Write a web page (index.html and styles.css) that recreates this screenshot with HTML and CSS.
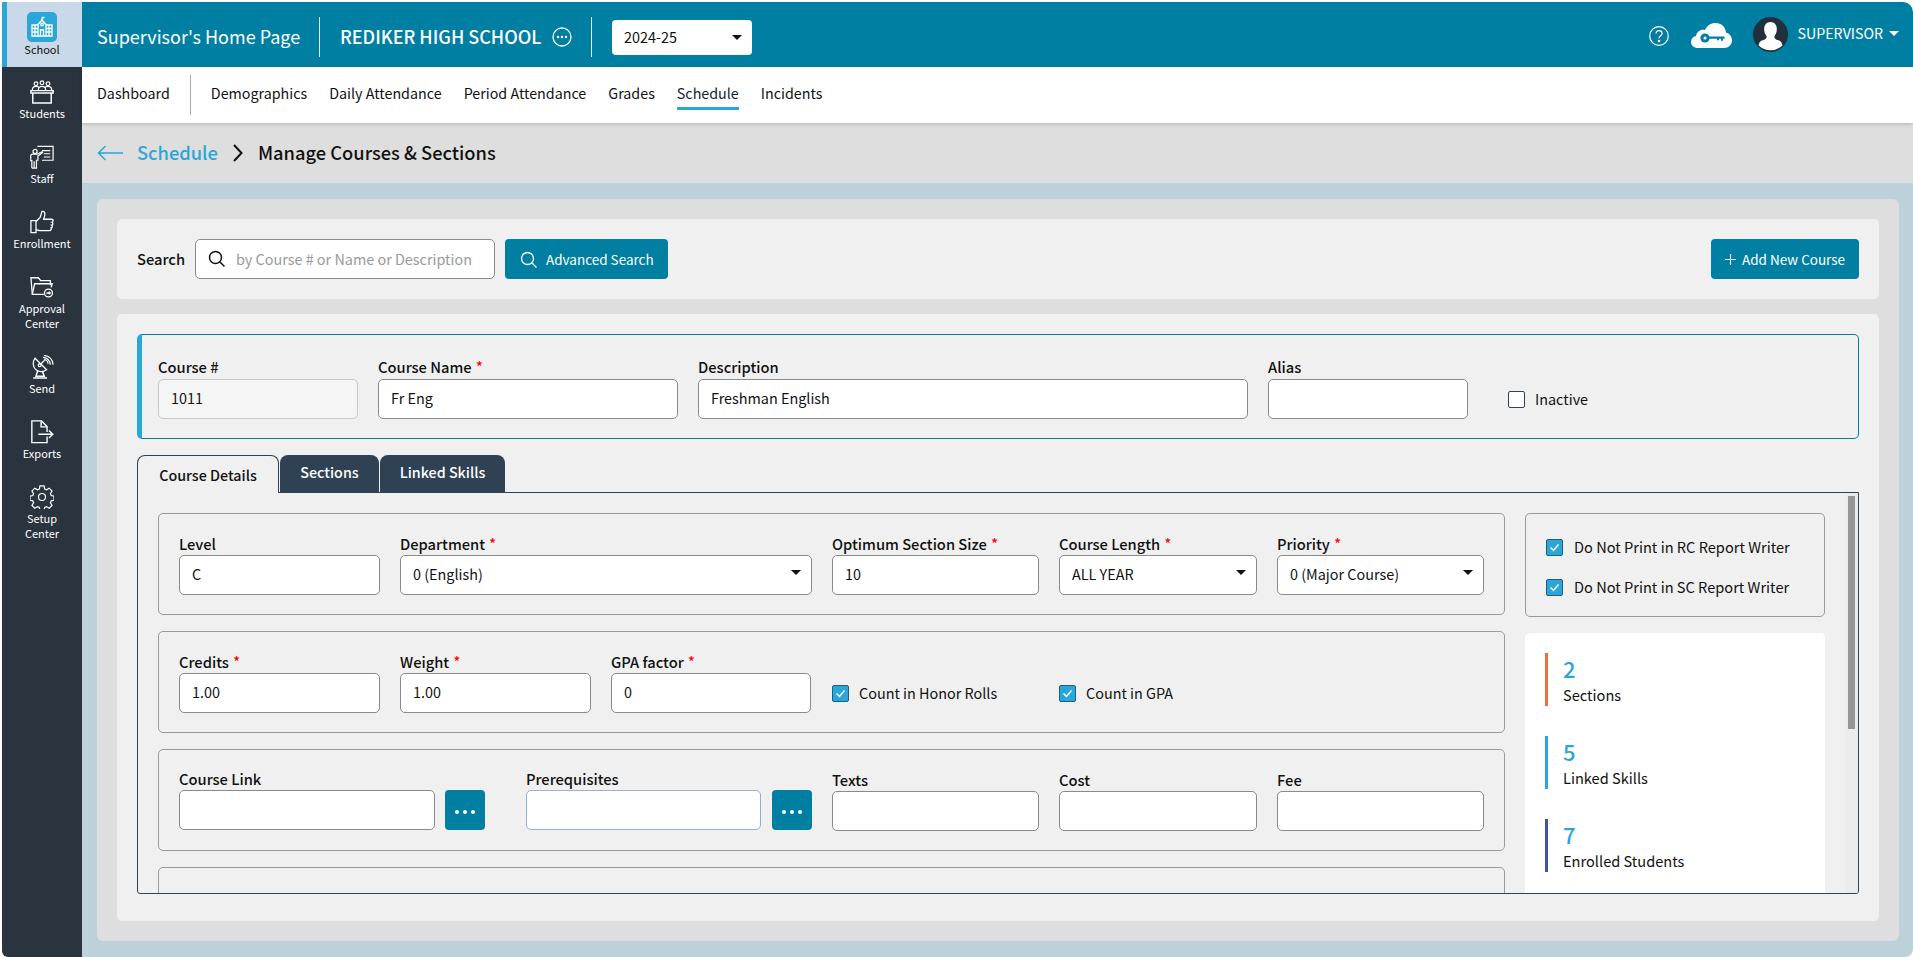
FILE: index.html
```html
<!DOCTYPE html>
<html lang="en">
<head>
<meta charset="utf-8">
<title>Manage Courses &amp; Sections</title>
<link rel="stylesheet" href="styles.css">
</head>
<body>
<div class="app">
  <nav class="side">
    <a class="side-item active">
      <span class="school-ico"><svg width="30" height="30" viewBox="0 0 30 30" fill="none" stroke="#fff" stroke-width="1.3"><path d="M11 12.5 15 8l4 4.5V24h-8z"/><path d="M15 8V5.5M15 5.5h2.500"/><circle cx="15" cy="12.5" r="1.3"/><path d="M13.5 24v-6h3v6"/><path d="M11 13H5v11h6M19 13h6v11h-6"/><path d="M5 16.5h6M5 20h6M19 16.5h6M19 20h6M8 13v11M22 13v11"/></svg></span>
      <span class="side-label">School</span>
    </a>
    <a class="side-item">
      <svg width="24" height="24" viewBox="0 0 26 26" fill="none" stroke="#fff" stroke-width="1.3"><circle cx="6.5" cy="4" r="2"/><circle cx="13" cy="3" r="2"/><circle cx="19.5" cy="4" r="2"/><path d="M2.5 11c0-3 1.500-4 4-4s3 .6 3.500 1.500M23.500 11c0-3-1.500-4-4-4s-3 .6-3.500 1.500M9 11c0-2.500 1.500-4 4-4s4 1.500 4 4"/><path d="M1 11.500h24v2.500H1zM3 14v11h20V14" stroke-width="1.600"/></svg>
      <span class="side-label">Students</span>
    </a>
    <a class="side-item">
      <svg width="24" height="24" viewBox="0 0 26 26" fill="none" stroke="#fff" stroke-width="1.300"><path d="M8 1.500h17v15H13"/><path d="M13 6h9M15 9.500h7M15 13h7"/><circle cx="5.500" cy="7" r="2.200"/><path d="M2 25v-8H.8v-5c0-1.500 1-2.200 2.200-2.200H8l5-2.500.6 1-5 3.500v4.700H7V25H4.500v-7.500M4.500 25H2"/></svg>
      <span class="side-label">Staff</span>
    </a>
    <a class="side-item">
      <svg width="24" height="24" viewBox="0 0 26 26" fill="none" stroke="#fff" stroke-width="1.400"><path d="M1 11.500h5.500v13H1zM6.500 12.500l4.500-4.500 2-6.500c2.500-.5 3.500 1.500 3 4l-1.200 4.500H23.500c2 0 2 3 .3 3.300 1.500.7 1.200 3-.3 3.200 1.200.8.900 2.800-.7 3 .7 1-.1 2.800-1.500 2.800H11c-2 0-3-1-4.500-1"/></svg>
      <span class="side-label">Enrollment</span>
    </a>
    <a class="side-item tall">
      <svg width="24" height="24" viewBox="0 0 26 26" fill="none" stroke="#fff" stroke-width="1.400"><path d="M15 21H2.500L1 3h8l2.500 3h10.500v5"/><path d="M2.500 21 5 9.500h19l-1 4"/><circle cx="20" cy="19.500" r="4.300"/><path d="M17.800 19.500h4.200M20.500 18l1.500 1.500-1.500 1.500"/></svg>
      <span class="side-label">Approval<br>Center</span>
    </a>
    <a class="side-item">
      <svg width="24" height="24" viewBox="0 0 26 26" fill="none" stroke="#fff" stroke-width="1.300"><path d="M5.500 3.500c-3 4-2.500 9 .5 12s8 3.500 12 .5z"/><circle cx="10.500" cy="11" r="1.600"/><path d="M10.500 11l5-5M14 2.500c4 0 8 3.500 8 8M15 .5c5.500 0 10 4.500 10 10M15 5c2.500 0 4.500 2 4.500 4.500"/><path d="M8.500 16.500 6.500 23h9l-2-5M3.500 25h15" stroke-width="1.600"/></svg>
      <span class="side-label">Send</span>
    </a>
    <a class="side-item">
      <svg width="24" height="24" viewBox="0 0 26 26" fill="none" stroke="#fff" stroke-width="1.500"><path d="M18.500 13V7l-6-6H2v23.500h16.500V18"/><path d="M12 1.500V7.500h6.500"/><path d="M9 15.500h15.500M20.500 11.500l4.200 4-4.200 4"/></svg>
      <span class="side-label">Exports</span>
    </a>
    <a class="side-item tall">
      <svg width="24" height="24" viewBox="0 0 26 26" fill="none" stroke="#fff" stroke-width="1.300"><circle cx="13" cy="13" r="3.800"/><path d="M10.800 1h4.400l.7 3.300 2 .9 2.900-1.800 3.100 3.100-1.800 2.900.9 2 3 .7v4.400l-3 .7-.9 2 1.800 2.900-3.100 3.100-2.900-1.800-2 .9-.7 3h-4.400l-.7-3-2-.9-2.900 1.800-3.100-3.100 1.800-2.900-.9-2-3-.7v-4.400l3-.7.9-2-1.800-2.900 3.100-3.100 2.900 1.800 2-.9z"/></svg>
      <span class="side-label">Setup<br>Center</span>
    </a>
  </nav>

  <div class="main">
    <header class="top">
      <span class="top-title">Supervisor's Home Page</span>
      <span class="top-sep"></span>
      <span class="top-school">REDIKER HIGH SCHOOL</span>
      <svg class="top-more" width="20" height="20" viewBox="0 0 20 20" fill="#fff"><circle cx="10" cy="10" r="9" fill="none" stroke="#fff" stroke-width="1.300"/><circle cx="6" cy="10" r="1.200"/><circle cx="10" cy="10" r="1.200"/><circle cx="14" cy="10" r="1.200"/></svg>
      <span class="top-sep sep-b"></span>
      <span class="year">2024-25<i class="caret-dark"></i></span>
      <span class="top-right">
        <svg class="help" width="20" height="20" viewBox="0 0 20 20" fill="none" stroke="#fff" stroke-width="1.200"><circle cx="10" cy="10" r="9.300"/><path d="M7 7.600c0-1.800 1.400-2.900 3-2.900s3 1 3 2.700c0 2.400-3 2.400-3 4.800"/><circle cx="10" cy="15" r=".7" fill="#fff"/></svg>
        <svg class="cloud" width="41" height="25" viewBox="0 0 41 25"><path fill="#fff" d="M7 25C3 25 0 22.500 0 19c0-3 2-5.500 5-6 1-5 5-7 9-6 2-4.500 6-7 10.500-7 6 0 10 4 10.500 9.500 3.500 1 6 4 6 8 0 4.500-3.500 7.500-8 7.500z"/><circle cx="14" cy="15" r="4.600" fill="#007fa3"/><circle cx="14" cy="15" r="1.500" fill="#fff"/><path fill="#007fa3" d="M18 13.500h15.500v2.200H32v2h-2v-2h-2v1.500h-2v-1.500h-8z"/></svg>
        <svg class="avatar" width="35" height="35" viewBox="0 0 35 35"><circle cx="17.500" cy="17.500" r="17.500" fill="#222f3c"/><path fill="#fff" d="M17.500 5c4 0 6.500 3 6.300 7.500-.1 3-1 5-2.300 6.500-.5 2 .5 3 4 4.300 2.500 1 3.700 2.500 3.900 5.200a17.500 17.500 0 0 1-23.800 0c.2-2.700 1.400-4.200 3.900-5.200 3.500-1.300 4.500-2.300 4-4.300-1.300-1.500-2.200-3.500-2.300-6.500C11 8 13.500 5 17.500 5z"/></svg>
        <span class="user">SUPERVISOR</span><i class="caret-light"></i>
      </span>
    </header>

    <div class="subnav">
      <a class="tab-link dash">Dashboard</a>
      <span class="sub-sep"></span>
      <a class="tab-link">Demographics</a>
      <a class="tab-link">Daily Attendance</a>
      <a class="tab-link">Period Attendance</a>
      <a class="tab-link">Grades</a>
      <a class="tab-link current">Schedule</a>
      <a class="tab-link">Incidents</a>
    </div>

    <div class="crumb">
      <svg class="back" width="26" height="16" viewBox="0 0 26 16" fill="none" stroke="#2ba6d8" stroke-width="1.500"><path d="M26 8H1.500M8.500 1 1.500 8l7 7"/></svg>
      <span class="crumb-link">Schedule</span>
      <svg class="chev" width="11" height="18" viewBox="0 0 11 18" fill="none" stroke="#111" stroke-width="2"><path d="m2 1 7.500 8L2 17"/></svg>
      <span class="crumb-now">Manage Courses &amp; Sections</span>
    </div>

    <div class="content">
      <div class="panel">
        <section class="card search-card">
          <label class="search-label">Search</label>
          <div class="search-box">
            <svg width="18" height="18" viewBox="0 0 18 18" fill="none" stroke="#111" stroke-width="1.500"><circle cx="7.500" cy="7.500" r="6"/><path d="m12 12 4.500 4.500"/></svg>
            <span class="placeholder">by Course # or Name or Description</span>
          </div>
          <button class="btn adv"><svg width="18" height="18" viewBox="0 0 18 18" fill="none" stroke="#fff" stroke-width="1.300"><circle cx="7.500" cy="7.500" r="6"/><path d="m12 12 4.500 4.500"/></svg>Advanced Search</button>
          <button class="btn add"><svg width="11" height="11" viewBox="0 0 11 11" fill="none" stroke="#fff" stroke-width="1.100"><path d="M5.500 0v11M0 5.500h11"/></svg>Add New Course</button>
        </section>

        <section class="card main-card">
          <div class="course-box">
            <div class="field w200"><label>Course #</label><div class="input ro">1011</div></div>
            <div class="field w300"><label>Course Name <b>*</b></label><div class="input">Fr Eng</div></div>
            <div class="field w550"><label>Description</label><div class="input">Freshman English</div></div>
            <div class="field w200"><label>Alias</label><div class="input"></div></div>
            <div class="inline-check inactive"><span class="check empty"></span>Inactive</div>
          </div>

          <div class="tabs">
            <span class="tab on">Course Details</span>
            <span class="tab t2">Sections</span>
            <span class="tab t3">Linked Skills</span>
          </div>

          <div class="tab-body">
            <div class="col-left">
              <div class="group row-a">
                <div class="field"><label>Level</label><div class="input">C</div></div>
                <div class="field"><label>Department <b>*</b></label><div class="input sel">0 (English)<i class="caret-dark"></i></div></div>
                <div class="field"><label>Optimum Section Size <b>*</b></label><div class="input">10</div></div>
                <div class="field"><label>Course Length <b>*</b></label><div class="input sel">ALL YEAR<i class="caret-dark"></i></div></div>
                <div class="field"><label>Priority <b>*</b></label><div class="input sel">0 (Major Course)<i class="caret-dark"></i></div></div>
              </div>
              <div class="group row-b">
                <div class="field"><label>Credits <b>*</b></label><div class="input">1.00</div></div>
                <div class="field"><label>Weight <b>*</b></label><div class="input">1.00</div></div>
                <div class="field"><label>GPA factor <b>*</b></label><div class="input">0</div></div>
                <div class="inline-check"><span class="check on"><svg width="11" height="9" viewBox="0 0 11 9" fill="none" stroke="#fff" stroke-width="1.500"><path d="m1.500 4.500 3 3 5-6"/></svg></span>Count in Honor Rolls</div>
                <div class="inline-check"><span class="check on"><svg width="11" height="9" viewBox="0 0 11 9" fill="none" stroke="#fff" stroke-width="1.500"><path d="m1.500 4.500 3 3 5-6"/></svg></span>Count in GPA</div>
              </div>
              <div class="group row-c">
                <div class="field gap-right"><label>Course Link</label><div class="pick first"><div class="input"></div><button class="dots"><i></i><i></i><i></i></button></div></div>
                <div class="field"><label>Prerequisites</label><div class="pick"><div class="input soft"></div><button class="dots"><i></i><i></i><i></i></button></div></div>
                <div class="field low"><label>Texts</label><div class="input"></div></div>
                <div class="field low"><label>Cost</label><div class="input"></div></div>
                <div class="field low"><label>Fee</label><div class="input"></div></div>
              </div>
              <div class="group"></div>
            </div>

            <div class="col-right">
              <div class="group flags">
                <div class="inline-check"><span class="check on"><svg width="11" height="9" viewBox="0 0 11 9" fill="none" stroke="#fff" stroke-width="1.500"><path d="m1.500 4.500 3 3 5-6"/></svg></span>Do Not Print in RC Report Writer</div>
                <div class="inline-check"><span class="check on"><svg width="11" height="9" viewBox="0 0 11 9" fill="none" stroke="#fff" stroke-width="1.500"><path d="m1.500 4.500 3 3 5-6"/></svg></span>Do Not Print in SC Report Writer</div>
              </div>
              <div class="stats">
                <div class="stat s-orange"><strong>2</strong><span>Sections</span></div>
                <div class="stat s-blue"><strong>5</strong><span>Linked Skills</span></div>
                <div class="stat s-indigo"><strong>7</strong><span>Enrolled Students</span></div>
              </div>
            </div>

            <div class="track"><div class="thumb"></div></div>
          </div>
        </section>
      </div>
    </div>
  </div>
</div>
</body>
</html>
```
FILE: styles.css
```css
* { box-sizing: border-box; }
html, body { margin: 0; height: 957px; overflow: hidden; background: #fff; }
body { padding: 2px 0 0 2px; font-family: "Noto Sans CJK JP", "Noto Sans", sans-serif; font-size: 14.400px; color: #111; }
i { font-style: normal; display: block; }
button { font-family: inherit; border: 0; }

.app { display: flex; height: 955px; }

/* sidebar */
.side { width: 80px; flex: none; background: #29343f; display: flex; flex-direction: column; border-bottom-left-radius: 6px; }
.side-item { height: 65px; flex: none; display: flex; flex-direction: column; align-items: center; padding-top: 13px; color: #fff; }
.side-item.tall { height: 80px; }
.side-item > svg { flex: none; }
.side-item.active { background: #c9d9e9; border-left: 5px solid #2ba6d8; padding: 10px 5px 0 0; color: #111; }
.school-ico { width: 30px; height: 30px; background: #2ba6d8; border-radius: 5px; display: block; }
.school-ico svg { display: block; }
.side-label { font-size: 11px; line-height: 15px; margin-top: 2px; text-align: center; }
.side-item.active .side-label { margin-top: 0; }

.main { flex: 1; min-width: 0; display: flex; flex-direction: column; }

/* header */
.top { height: 65px; flex: none; background: #007fa3; border-top-right-radius: 10px; display: flex; align-items: center; padding: 5px 0 0 15px; color: #fff; }
.top-title { font-size: 18px; width: 222px; white-space: nowrap; margin-top: -3px; }
.top-sep { width: 1px; height: 40px; background: #e3eef2; flex: none; }
.top-school { font-size: 18px; font-weight: 500; margin: -3px 0 0 20px; width: 212px; white-space: nowrap; }
.top-more { margin-left: 0; flex: none; }
.sep-b { margin-left: 19px; }
.year { width: 140px; height: 35px; margin-left: 20px; background: #fff; color: #111; border-radius: 4px; display: flex; align-items: center; justify-content: space-between; padding: 0 10px 2px 12px; }
.caret-dark { width: 0; height: 0; border-left: 5px solid transparent; border-right: 5px solid transparent; border-top: 5px solid #111; }
.year .caret-dark { margin-top: 2px; }
.top-right { margin-left: auto; display: flex; align-items: center; padding-right: 14px; }
.help { margin: -2px 22px 0 0; }
.cloud { margin: -3px 21px 0 0; }
.avatar { margin: -6px 10px 0 0; }
.user { font-size: 14.200px; margin-top: -8px; }
.caret-light { margin: -7px 0 0 6px; width: 0; height: 0; border-left: 5px solid transparent; border-right: 5px solid transparent; border-top: 5px solid #fff; }

/* sub nav */
.subnav { height: 56px; flex: none; background: #fff; display: flex; align-items: flex-start; padding: 8px 0 0 15px; box-shadow: 0 1px 4px rgba(0,0,0,.2); position: relative; font-size: 14.300px; }
.tab-link { margin-right: 22px; line-height: 36px; height: 35px; white-space: nowrap; }
.tab-link.dash { margin-right: 20px; }
.sub-sep { width: 1px; height: 40px; background: #aaa; margin-right: 20px; }
.tab-link.current { box-shadow: inset 0 -3px 0 #2ba6d8; color: #123; }

/* breadcrumb */
.crumb { height: 60px; flex: none; background: #dedede; display: flex; align-items: center; padding-left: 15px; }
.crumb-link { font-size: 18.300px; font-weight: 500; color: #2ba6d8; margin: -2px 0 0 14px; }
.chev { margin: 0 15px 0 14px; }
.crumb-now { font-size: 18.300px; font-weight: 500; margin-top: -2px; }

/* content */
.content { flex: 1; min-height: 0; background: #bdd1db; padding: 16px 14px 14px 15px; border-bottom-right-radius: 8px; }
.panel { height: 742px; background: #dedede; border-radius: 6px; padding: 20px; display: flex; flex-direction: column; gap: 15px; }
.card { background: #f0f0f0; border-radius: 5px; }

.search-card { height: 80px; flex: none; display: flex; align-items: center; padding: 0 20px; }
.search-label { font-weight: 500; font-size: 14.700px; width: 58px; margin-top: -2px; }
.search-box { width: 300px; height: 40px; background: #fff; border: 1px solid #8a8a8a; border-radius: 5px; display: flex; align-items: center; padding-left: 12px; }
.placeholder { color: #9a9a9a; margin: -2px 0 0 10px; white-space: nowrap; }
.btn { height: 40px; background: #007fa3; color: #fff; border-radius: 4px; font-size: 13.500px; display: flex; align-items: center; white-space: nowrap; padding-bottom: 2px; }
.btn svg { margin-top: 2px; flex: none; }
.adv { width: 163px; margin-left: 10px; padding-left: 15px; gap: 8px; }
.add { width: 148px; margin-left: auto; padding-left: 14px; gap: 6px; }

.main-card { flex: 1; min-height: 0; padding: 20px; }
.course-box { height: 105px; background: #f0f0f0; border: 1px solid #007fa3; border-left: 5px solid #2ba6d8; border-radius: 5px; display: flex; align-items: flex-end; gap: 20px; padding: 0 0 19px 16px; }
.course-box .field label { line-height: 24px; }
.field { display: flex; flex-direction: column; min-width: 0; }
.field label { font-weight: 500; font-size: 14.700px; line-height: 22px; white-space: nowrap; }
.field label b { color: #f00; font-weight: 500; margin-left: 1px; position: relative; top: -1px; font-size: 14px; }
.w200 { width: 200px; } .w300 { width: 300px; } .w550 { width: 550px; }
.input { height: 40px; background: #fff; border: 1px solid #8a8a8a; border-radius: 5px; padding: 0 12px; line-height: 36px; }
.input.ro { background: #f5f5f5; border-color: #c8c8c8; }
.input.soft { border-color: #8fb3d9; }
.input.sel { display: flex; justify-content: space-between; align-items: center; padding: 0 10px 2px 12px; }
.input.sel .caret-dark { margin-top: -3px; }
.inactive { margin-left: 20px; }
.check { width: 17px; height: 17px; flex: none; border-radius: 2px; display: flex; align-items: center; justify-content: center; margin: 2px 10px 0 0; }
.check.empty { background: #fff; border: 1px solid #2f4254; }
.check.on { background: #2ba6d8; border: 1px solid #1d5f80; }

.tabs { display: flex; height: 37px; margin-top: 16px; gap: 1px; position: relative; z-index: 1; }
.tab { background: #2f4254; color: #fff; border-radius: 8px 8px 0 0; font-size: 14.300px; font-weight: 500; text-align: center; line-height: 34px; }
.tab.on { width: 142px; background: #f0f0f0; color: #111; border: 1px solid #2f4254; border-bottom: 0; height: 38px; line-height: 38px; }
.t2 { width: 99px; } .t3 { width: 125px; }

.tab-body { height: 402px; border: 1px solid #2f4254; border-radius: 0 0 3px 3px; display: flex; padding: 20px 0 0 20px; overflow: hidden; }
.col-left { width: 1347px; flex: none; display: flex; flex-direction: column; gap: 16px; }
.group { height: 102px; flex: none; border: 1px solid #9a9a9a; border-radius: 5px; }
.row-a, .row-b, .row-c { display: grid; padding: 0 0 19px 20px; align-items: end; column-gap: 20px; }
.row-c { padding-bottom: 20px; }
.row-a { grid-template-columns: 201px 412px 207px 198px 207px; }
.row-b { grid-template-columns: 201px 191px 200px 207px 198px; }
.row-b .inline-check { margin-left: 1px; }
.row-c { grid-template-columns: 327px 286px 207px 198px 207px; }
.gap-right { margin-right: 21px; }
.low { margin-bottom: -1px; }
.pick { display: flex; gap: 11px; }
.pick.first { gap: 10px; }
.pick .input { flex: 1; }
.dots { width: 40px; height: 40px; flex: none; background: #007fa3; border-radius: 4px; display: flex; align-items: center; justify-content: center; gap: 4px; padding: 3px 0 0; }
.dots i { width: 4px; height: 4px; background: #fff; border-radius: 50%; }
.inline-check { display: flex; align-items: center; height: 40px; white-space: nowrap; padding-bottom: 2px; }

.col-right { width: 300px; flex: none; margin-left: 20px; }
.flags { height: 104px; display: flex; flex-direction: column; padding: 13px 0 0 20px; font-size: 14.600px; }
.flags .check { margin-right: 11px; }
.stats { margin-top: 16px; height: 300px; background: #fff; border-radius: 5px 5px 0 0; padding: 20px; display: flex; flex-direction: column; gap: 30px; }
.stat { height: 53px; flex: none; padding-left: 15px; display: flex; flex-direction: column; }
.stat strong { color: #2ba6d8; font-size: 22px; font-weight: 500; line-height: 32px; margin: -1px 0 0; }
.stat span { font-size: 14.600px; line-height: 21px; }
.s-orange { border-left: 3px solid #f26d45; }
.s-blue { border-left: 3px solid #2ba6d8; }
.s-indigo { border-left: 3px solid #45549b; }

.track { width: 13px; flex: none; margin-left: 20px; margin-top: -20px; background: #ebebeb; padding: 3px; height: 400px; }
.thumb { width: 7px; height: 233px; background: #959595; }
```
